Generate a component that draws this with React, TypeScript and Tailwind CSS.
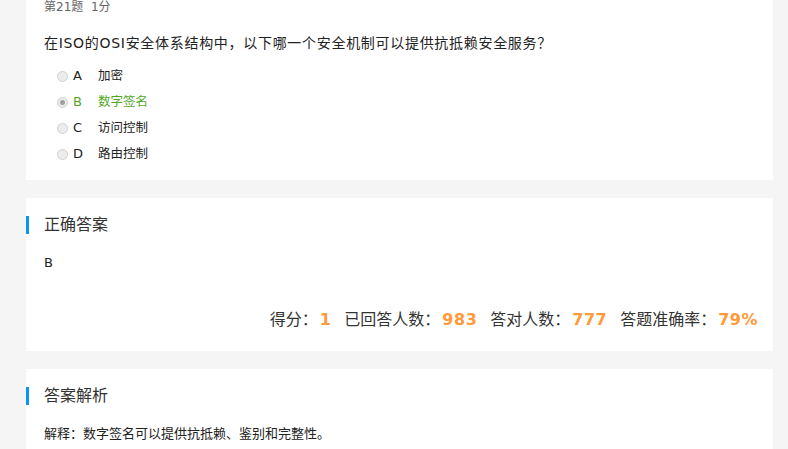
import React from "react";

const font = { fontFamily: '"DejaVu Sans", "Noto Sans CJK SC", sans-serif' };

function Radio({ checked }: { checked?: boolean }) {
  return (
    <span className="flex h-[11px] w-[11px] items-center justify-center rounded-full border border-[#d0d0d0] bg-[#ececec]">
      {checked && <span className="h-[5px] w-[5px] rounded-full bg-[#a0a0a0]" />}
    </span>
  );
}

function Option({ letter, text, checked }: { letter: string; text: string; checked?: boolean }) {
  return (
    <div className={`flex h-[26px] items-center text-[12.5px] ${checked ? "text-[#52a81e]" : "text-[#222]"}`}>
      <Radio checked={checked} />
      <span className="ml-[5px] w-[25px] text-[13px]">{letter}</span>
      <span>{text}</span>
    </div>
  );
}

function SectionTitle({ children }: { children: React.ReactNode }) {
  return (
    <div className="flex h-[18px] items-center">
      <span className="h-[18px] w-[3px] bg-[#0996f2]" />
      <span className="ml-[15px] text-[16px] text-[#333]">{children}</span>
    </div>
  );
}

function Stat({ label, value }: { label: string; value: string }) {
  return (
    <span className="flex items-baseline">
      <span className="text-[16px] text-[#333]">{label}</span>
      <span className="ml-[2px] text-[16px] font-bold tracking-[0.5px] text-[#ff9a3a]">{value}</span>
    </span>
  );
}

export default function App() {
  return (
    <div className="h-[449px] w-[788px] overflow-hidden bg-[#f5f5f5] pl-[26px] pr-[15px]" style={font}>
      <div className="flex flex-col gap-[18px]">
        <div className="h-[180px] bg-white pl-[18px] pt-[0px]">
          <div className="h-[14px] text-[12px] leading-[14px] text-[#666]">第21题&nbsp;&nbsp;1分</div>
          <div className="mt-[20px] text-[14px] leading-[18px] tracking-[0.7px] text-[#222]">
            在ISO的OSI安全体系结构中，以下哪一个安全机制可以提供抗抵赖安全服务？
          </div>
          <div className="ml-[13px] mt-[11px] flex flex-col">
            <Option letter="A" text="加密" />
            <Option letter="B" text="数字签名" checked />
            <Option letter="C" text="访问控制" />
            <Option letter="D" text="路由控制" />
          </div>
        </div>
        <div className="flex h-[153px] flex-col bg-white pt-[18px]">
          <SectionTitle>正确答案</SectionTitle>
          <div className="ml-[18px] mt-[19px] text-[13px] text-[#222]">B</div>
          <div className="mr-[15px] mt-[35px] flex justify-end gap-[13px]">
            <Stat label="得分：" value="1" />
            <Stat label="已回答人数：" value="983" />
            <Stat label="答对人数：" value="777" />
            <Stat label="答题准确率：" value="79%" />
          </div>
        </div>
        <div className="flex h-[100px] flex-col bg-white pt-[18px]">
          <SectionTitle>答案解析</SectionTitle>
          <div className="ml-[18px] mt-[19px] text-[13px] text-[#222]">解释：数字签名可以提供抗抵赖、鉴别和完整性。</div>
        </div>
      </div>
    </div>
  );
}
